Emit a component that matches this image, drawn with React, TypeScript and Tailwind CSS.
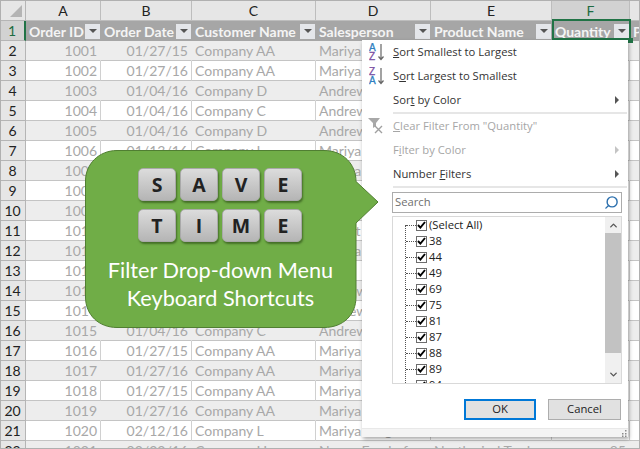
import { ChevronDown, ChevronUp, Search } from "lucide-react";

const HEADERS = ["Order ID", "Order Date", "Customer Name", "Salesperson", "Product Name", "Quantity", "Price"];

const ROWS = [
  ["1001", "01/27/15", "Company AA", "Mariya Sergienko", "Northwind Traders Chai", "49"],
  ["1002", "01/27/16", "Company AA", "Mariya Sergienko", "Northwind Traders Coffee", "75"],
  ["1003", "01/04/16", "Company D", "Andrew Cencini", "Northwind Traders Green Tea", "81"],
  ["1004", "01/04/16", "Company C", "Andrew Cencini", "Northwind Traders Beer", "44"],
  ["1005", "01/04/16", "Company D", "Andrew Cencini", "Northwind Traders Syrup", "88"],
  ["1006", "01/13/16", "Company L", "Mariya Sergienko", "Northwind Traders Chai", "38"],
  ["1007", "01/13/16", "Company L", "Mariya Sergienko", "Northwind Traders Coffee", "69"],
  ["1008", "01/19/16", "Company H", "Nancy Freehafer", "Northwind Traders Olive Oil", "87"],
  ["1009", "01/19/16", "Company H", "Nancy Freehafer", "Northwind Traders Curry", "89"],
  ["1010", "01/27/16", "Company AA", "Robert Zare", "Northwind Traders Chai", "94"],
  ["1011", "01/27/15", "Company AA", "Mariya Sergienko", "Northwind Traders Beer", "49"],
  ["1012", "01/27/16", "Company AA", "Laura", "Northwind Traders Crab", "75"],
  ["1013", "01/27/15", "Company F", "Andrew Cencini", "Northwind Traders Chai", "81"],
  ["1014", "01/27/16", "Company C", "Andrew Cencini", "Northwind Traders Coffee", "44"],
  ["1015", "01/04/16", "Company C", "Andrew Cencini", "Northwind Traders Tea", "88"],
  ["1016", "01/27/15", "Company AA", "Mariya Sergienko", "Northwind Traders Chai", "38"],
  ["1017", "01/27/16", "Company AA", "Mariya Sergienko", "Northwind Traders Coffee", "69"],
  ["1018", "01/27/15", "Company AA", "Mariya Sergienko", "Northwind Traders Beer", "87"],
  ["1019", "01/27/16", "Company AA", "Mariya Sergienko", "Northwind Traders Crab", "88"],
  ["1020", "02/12/16", "Company L", "Mariya Sergienko", "Northwind Traders Chai", "89"],
  ["1021", "02/22/16", "Company H", "Nancy Freehafer", "Northwind Traders Chocolate Biscuits Mix", "85"],
];

const VALUES = ["(Select All)", "38", "44", "49", "69", "75", "81", "87", "88", "89", "94"];

const COLS = "grid-cols-[26px_75px_91px_124px_115px_121px_78px_10px]";

function FilterButton() {
  return (
    <span className="mr-px flex h-[15px] w-[15px] shrink-0 items-center justify-center bg-[#e4e6ea]">
      <span className="h-0 w-0 border-x-[4px] border-t-[4px] border-x-transparent border-t-[#555]" />
    </span>
  );
}

function SortIcon({ top, bottom, topColor, bottomColor }: { top: string; bottom: string; topColor: string; bottomColor: string }) {
  return (
    <svg width="16" height="18" viewBox="0 0 16 18" className="shrink-0">
      <text x="0" y="8" fontSize="10" fontFamily="Liberation Sans" stroke={topColor} strokeWidth="0.3" fill={topColor}>{top}</text>
      <text x="0" y="17" fontSize="10" fontFamily="Liberation Sans" stroke={bottomColor} strokeWidth="0.3" fill={bottomColor}>{bottom}</text>
      <path d="M12 1v15M9.5 13.5 12 16.5l2.5-3" fill="none" stroke="#666" strokeWidth="1.2" />
    </svg>
  );
}

function ClearFilterIcon() {
  return (
    <svg width="17" height="16" viewBox="0 0 17 16" className="shrink-0">
      <path d="M0 0h12L8 5v3L5 10V5z" fill="#a8a8a8" />
      <path d="M7 8l7 7M14 8l-7 7" stroke="#a0a0a0" strokeWidth="1.4" fill="none" />
    </svg>
  );
}

function MenuItem({ children, icon, arrow, disabled }: { children: React.ReactNode; icon?: React.ReactNode; arrow?: boolean; disabled?: boolean }) {
  return (
    <div className={`flex h-6 items-center pr-[9px] ${disabled ? "text-[#a6a6a6]" : "text-[#333]"}`}>
      <span className="flex w-[31px] justify-center pr-0.5 pl-0">{icon}</span>
      <span className="flex-1 whitespace-nowrap">{children}</span>
      {arrow && (
        <span className={`h-0 w-0 border-y-[4px] border-l-[4px] border-y-transparent ${disabled ? "border-l-[#c4c4c4]" : "border-l-[#555]"}`} />
      )}
    </div>
  );
}

function FilterMenu() {
  return (
    <div className="absolute top-[40px] left-[362px] flex h-[397px] w-[266px] flex-col bg-white font-['Open_Sans',sans-serif] text-[11.25px] shadow-[1px_2px_4px_rgba(0,0,0,0.35)]">
      <MenuItem icon={<SortIcon top="A" bottom="Z" topColor="#2f7fc1" bottomColor="#7a4fa3" />}>
        <u>S</u>ort Smallest to Largest
      </MenuItem>
      <MenuItem icon={<SortIcon top="Z" bottom="A" topColor="#7a4fa3" bottomColor="#2f7fc1" />}>
        S<u>o</u>rt Largest to Smallest
      </MenuItem>
      <MenuItem arrow>
        Sor<u>t</u> by Color
      </MenuItem>
      <div className="ml-[31px] mr-[1px] h-0.5 bg-[#e6e6e6]" />
      <MenuItem disabled icon={<ClearFilterIcon />}>
        <u>C</u>lear Filter From "Quantity"
      </MenuItem>
      <MenuItem disabled arrow>
        F<u>i</u>lter by Color
      </MenuItem>
      <MenuItem arrow>
        Number <u>F</u>ilters
      </MenuItem>
      <div className="ml-[31px] mr-[1px] h-0.5 bg-[#e6e6e6]" />

      <div className="mt-1 ml-[30px] flex h-[21px] w-[230px] items-center justify-between border border-[#acacac] pr-0.5 pl-0.5 text-[#6f6f6f]">
        <span>Search</span>
        <Search size={15} strokeWidth={2.25} className="-scale-x-100 text-[#2b6fad]" />
      </div>

      <div className="relative mt-[3px] ml-[30px] flex h-[168px] w-[230px] overflow-hidden border border-[#d9d9d9] text-[#222]">
        <div className="relative flex-1">
          <div className="absolute top-2 bottom-0 left-[12px] border-l border-dotted border-[#555]" />
          {VALUES.map((value) => (
            <div key={value} className="flex h-4 items-center">
              <span className="ml-[13px] w-[10px] border-t border-dotted border-[#555]" />
              <span className="flex h-[11px] w-[11px] shrink-0 items-center justify-center border border-[#6d6d6d] bg-white">
                <svg width="9" height="8" viewBox="0 0 9 8">
                  <path d="M1 4l2.4 2.6L8 1" fill="none" stroke="#000" strokeWidth="1.9" />
                </svg>
              </span>
              <span className="ml-[2px] whitespace-nowrap">{value}</span>
            </div>
          ))}
        </div>
        <div className="flex w-4 flex-col bg-[#f0f0f0]">
          <div className="flex h-[16px] items-center justify-center text-[#555]">
            <ChevronUp size={11} strokeWidth={3} />
          </div>
          <div className="h-[120px] bg-[#c2c2c2]" />
          <div className="flex flex-1 items-end justify-center pb-[3px] text-[#555]">
            <ChevronDown size={11} strokeWidth={3} />
          </div>
        </div>
      </div>

      <div className="mt-[15px] flex justify-end gap-3 pr-[7px] text-[#222]">
        <button type="button" className="h-[21px] w-[72px] border-2 border-[#0078d7] bg-[#e1e1e1]">OK</button>
        <button type="button" className="h-[21px] w-[73px] border border-[#adadad] bg-[#e1e1e1]">Cancel</button>
      </div>

      <div className="mt-auto flex h-[9px] items-center justify-end border-t border-[#e8e8e8] bg-[#f4f4f4] pr-px">
        <svg width="7" height="7" viewBox="0 0 7 7">
          <path d="M5 0h1.5v1.5H5zM5 3h1.5v1.5H5zM2 3h1.5v1.5H2zM5 5.5h1.5V7H5zM2 5.5h1.5V7H2z" fill="#8a8a8a" />
        </svg>
      </div>
    </div>
  );
}

function Key({ letter }: { letter: string }) {
  return (
    <div className="flex h-[33px] w-[38px] items-center justify-center rounded-[5px] border border-[#a9a9a9] bg-gradient-to-b from-[#dcdcdc] to-[#b5b5b5] font-['Open_Sans',sans-serif] text-[19.5px] font-bold text-[#222] shadow-[1px_2px_2px_rgba(40,70,20,0.6)]">
      {letter}
    </div>
  );
}

function Callout() {
  return (
    <div className="absolute top-[150px] left-[85px] h-[178px] w-[294px]">
      <svg width="294" height="178" viewBox="0 0 294 178" className="absolute inset-0">
        <path
          d="M32 .5H239C258 .5 271 14 271 31.5L293 52 271 73V147C271 165 258 177.5 239 177.5H32C14 177.5 .5 165 .5 147V31C.5 14 14 .5 32 .5Z"
          fill="#70ad47"
          stroke="#507e32"
        />
      </svg>
      <div className="relative flex w-[271px] flex-col items-center pt-[18px] font-['Lato',sans-serif] text-[21.7px] leading-[28px] text-white">
        <div className="mr-px flex gap-1">
          {"SAVE".split("").map((l, i) => <Key key={i} letter={l} />)}
        </div>
        <div className="mt-2 mr-px flex gap-1">
          {"TIME".split("").map((l, i) => <Key key={i} letter={l} />)}
        </div>
        <div className="mt-[14px]">Filter Drop-down Menu</div>
        <div>Keyboard Shortcuts</div>
      </div>
    </div>
  );
}

export default function App() {
  return (
    <div className="relative h-[449px] w-[640px] overflow-hidden bg-white font-['Lato',sans-serif] text-[14px]">
      <div className={`grid ${COLS} auto-rows-[20px] [grid-template-rows:21px]`}>
        {/* column letters */}
        <div className="relative border-r border-b border-[#b5b5b5] bg-[#e6e6e6]">
          <span className="absolute right-[3px] bottom-[3px] h-0 w-0 border-b-[12px] border-l-[12px] border-b-[#b4b4b4] border-l-transparent" />
        </div>
        {["A", "B", "C", "D", "E", "F", ""].map((c, i) => (
          <div
            key={i}
            className={`flex items-center justify-center border-r border-b border-[#bdbdbd] ${c === "F" ? "bg-[#d2d2d2] text-[#1e6b41]" : "bg-[#e6e6e6] text-[#222]"}`}
          >
            {c}
          </div>
        ))}

        {/* table header */}
        <div className="flex items-center justify-center border-r-2 border-b border-r-[#217346] border-b-[#b5b5b5] bg-[#d2d2d2] text-[#1e6b41]">1</div>
        {HEADERS.map((h, i) => (
          <div key={h} className="flex items-center justify-between overflow-hidden bg-[#a6a6a6] pl-[3px] font-bold whitespace-nowrap text-[#f4f4f4]">
            <span>{h}</span>
            {i < 6 && <FilterButton />}
          </div>
        ))}

        {/* body */}
        {ROWS.map((row, r) => {
          const striped = r % 2 === 0;
          const bg = striped ? "bg-[#ededed]" : "bg-white";
          const edge = striped ? "border-r-[#ededed]" : "border-r-[#d0d0d0]";
          return [
            <div key={`h${r}`} className="flex items-center justify-center border-r border-b border-[#b5b5b5] bg-[#e6e6e6] text-[#222]">
              {r + 2}
            </div>,
            ...row.map((v, c) => (
              <div
                key={`${r}-${c}`}
                className={`overflow-hidden border-r border-b border-b-[#c4c4c4] px-[3px] leading-[19px] whitespace-nowrap text-[#a8a8a8] ${bg} ${edge} ${c < 2 || c === 5 ? "text-right" : ""}`}
              >
                {v}
              </div>
            )),
            <div key={`g${r}`} className={`border-b border-b-[#c4c4c4] ${bg}`} />,
          ];
        })}
      </div>

      {/* selected cell F1 */}
      <div className="pointer-events-none absolute top-[19px] left-[552px] h-[21px] w-[79px] border-2 border-[#217346]" />
      <div className="absolute top-[38px] left-[628px] h-[5px] w-[5px] bg-[#217346]" />

      <FilterMenu />
      <Callout />
      <div className="pointer-events-none absolute inset-0 shadow-[inset_0_0_0_1px_#b0b0b0]" />
    </div>
  );
}
